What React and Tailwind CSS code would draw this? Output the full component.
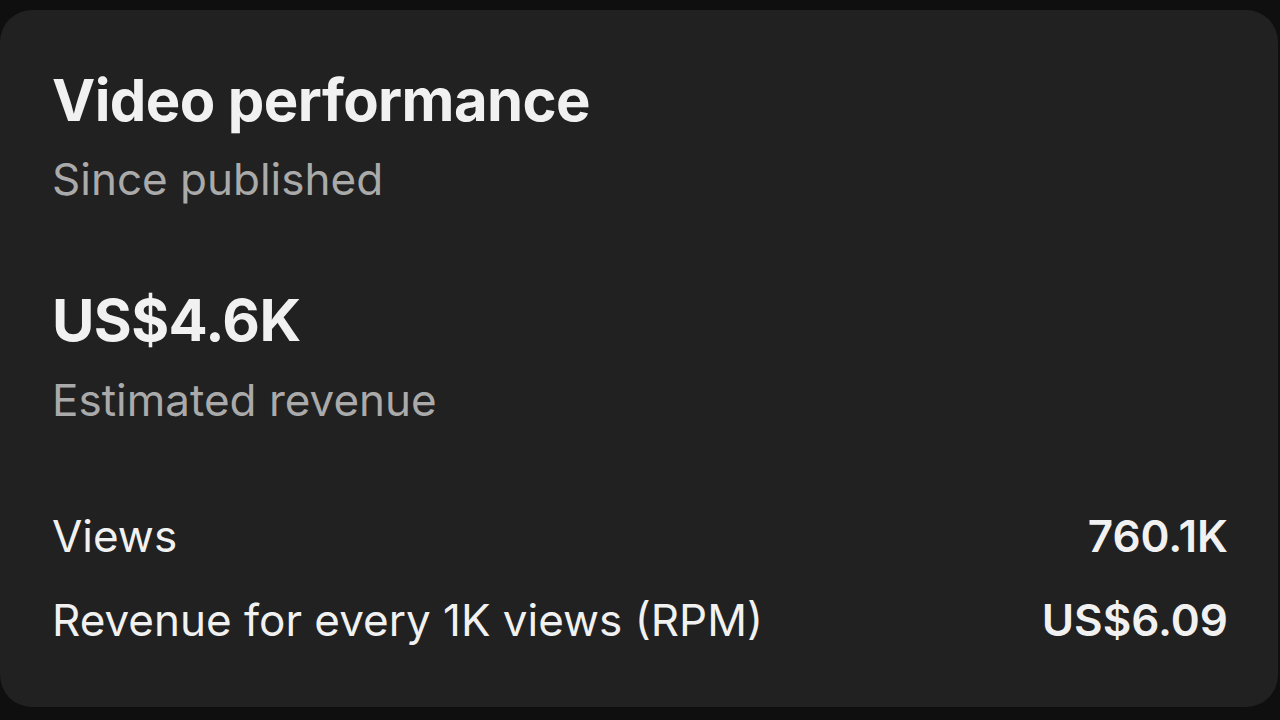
export default function App() {
  return (
    <div
      className="w-[1280px] h-[720px] bg-[#0f0f0f] pt-[10px] pb-[13px] pl-0 pr-[2px] overflow-hidden"
      style={{ fontFamily: "Inter, 'Noto Sans', sans-serif" }}
    >
      <div className="h-full bg-[#212121] rounded-[32px] pl-[52px] pr-[50px] pt-[60px] flex flex-col">
        <div className="text-[58px] leading-[60px] font-bold text-[#f1f1f1] tracking-[-0.6px]">
          Video performance
        </div>
        <div className="text-[44px] leading-[50px] mt-[24px] text-[#aaaaaa]">
          Since published
        </div>

        <div className="text-[58px] leading-[60px] font-bold text-[#f1f1f1] mt-[86px] tracking-[-0.6px]">
          US$4.6K
        </div>
        <div className="text-[44px] leading-[50px] mt-[25px] text-[#aaaaaa]">
          Estimated revenue
        </div>

        <div className="mt-[86px] flex flex-col gap-[34px] text-[44px] leading-[50px] text-[#f1f1f1]">
          <div className="flex justify-between">
            <span>Views</span>
            <span className="font-semibold">760.1K</span>
          </div>
          <div className="flex justify-between">
            <span>Revenue for every 1K views (RPM)</span>
            <span className="font-semibold">US$6.09</span>
          </div>
        </div>
      </div>
    </div>
  );
}
